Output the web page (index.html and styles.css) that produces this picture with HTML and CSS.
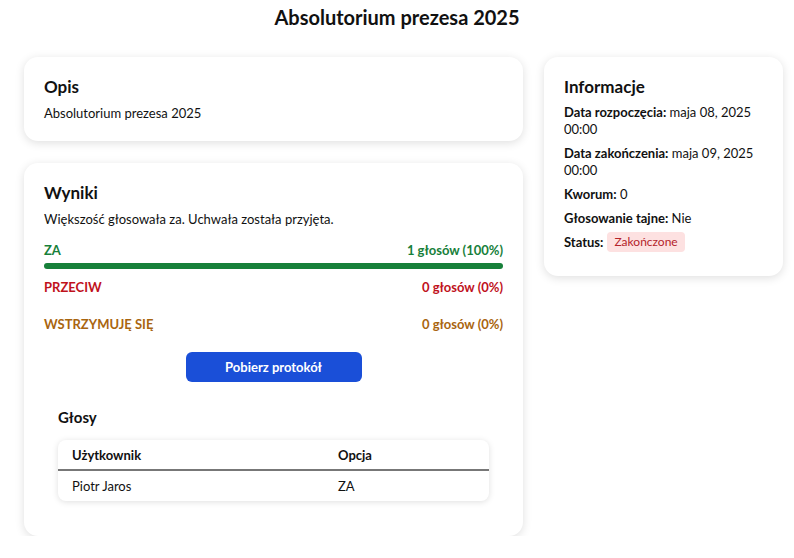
FILE: index.html
```html
<!DOCTYPE html>
<html lang="pl">
<head>
<meta charset="utf-8">
<title>Absolutorium prezesa 2025</title>
<link rel="stylesheet" href="styles.css">
</head>
<body>
<h1 class="page-title">Absolutorium prezesa 2025</h1>
<div class="layout">
  <div class="main-col">
    <section class="card">
      <h2 class="card-title">Opis</h2>
      <p class="text">Absolutorium prezesa 2025</p>
    </section>
    <section class="card">
      <h2 class="card-title">Wyniki</h2>
      <p class="text">Większość głosowała za. Uchwała została przyjęta.</p>
      <div class="results">
        <div class="result result-za">
          <div class="result-row"><span>ZA</span><span>1 głosów (100%)</span></div>
          <div class="bar"><div class="bar-fill" style="width:100%"></div></div>
        </div>
        <div class="result result-przeciw">
          <div class="result-row"><span>PRZECIW</span><span>0 głosów (0%)</span></div>
          <div class="bar"><div class="bar-fill" style="width:0%"></div></div>
        </div>
        <div class="result result-wstrz">
          <div class="result-row"><span>WSTRZYMUJĘ SIĘ</span><span>0 głosów (0%)</span></div>
          <div class="bar"><div class="bar-fill" style="width:0%"></div></div>
        </div>
      </div>
      <div class="actions"><button class="btn">Pobierz protokół</button></div>
      <div class="votes">
        <h3 class="votes-title">Głosy</h3>
        <div class="table-wrap">
          <table class="votes-table">
            <thead><tr><th class="col-user">Użytkownik</th><th>Opcja</th></tr></thead>
            <tbody><tr><td>Piotr Jaros</td><td>ZA</td></tr></tbody>
          </table>
        </div>
      </div>
    </section>
  </div>
  <aside class="side-col">
    <section class="card info">
      <h2 class="card-title">Informacje</h2>
      <p class="info-line"><b>Data rozpoczęcia:</b> maja 08, 2025 00:00</p>
      <p class="info-line"><b>Data zakończenia:</b> maja 09, 2025 00:00</p>
      <p class="info-line"><b>Kworum:</b> 0</p>
      <p class="info-line"><b>Głosowanie tajne:</b> Nie</p>
      <p class="info-line status-line"><b>Status:</b> <span class="badge">Zakończone</span></p>
    </section>
  </aside>
</div>
</body>
</html>
```
FILE: styles.css
```css
* { box-sizing: border-box; }
body {
  margin: 0;
  background: #fff;
  color: #111;
  font-family: Lato, "Noto Sans", sans-serif;
  font-size: 13px;
}
.page-title {
  margin: 5px 0 0;
  text-align: center;
  font-size: 20px;
  line-height: 24px;
  font-weight: 700;
}
.layout {
  display: grid;
  grid-template-columns: 499px 239px;
  gap: 21px;
  padding: 28px 0 0 24px;
  align-items: start;
}
.main-col {
  display: flex;
  flex-direction: column;
  gap: 22px;
}
.card {
  background: #fff;
  border-radius: 14px;
  box-shadow: 0 2px 10px rgba(0,0,0,0.13);
  padding: 19px 20px 18px;
}
.card-title {
  margin: 0;
  font-size: 17px;
  line-height: 22px;
  font-weight: 700;
}
.text {
  margin: 5px 0 0;
  line-height: 20px;
}
.results { margin-top: 11px; }
.result + .result { margin-top: 8px; }
.result-row {
  display: flex;
  justify-content: space-between;
  font-weight: 700;
  line-height: 20px;
}
.bar {
  margin-top: 3px;
  height: 6px;
  border-radius: 3px;
}
.bar-fill { height: 100%; border-radius: 3px; }
.result-za { color: #17803a; }
.result-za .bar-fill { background: #17803a; }
.result-przeciw { color: #c0121c; }
.result-przeciw .bar-fill { background: #c0121c; }
.result-wstrz { color: #a9650f; }
.result-wstrz .bar-fill { background: #a9650f; }
.actions {
  display: flex;
  justify-content: center;
  margin-top: 9px;
}
.btn {
  width: 176px;
  height: 30px;
  border: 0;
  border-radius: 6px;
  background: #1a4fd8;
  color: #fff;
  font-family: inherit;
  font-size: 13px;
  font-weight: 700;
}
.votes {
  padding: 0 14px 17px;
  margin-top: 24px;
}
.votes-title {
  margin: 0;
  font-size: 15px;
  line-height: 22px;
  font-weight: 700;
}
.table-wrap {
  margin-top: 12px;
  border-radius: 8px;
  box-shadow: 0 1px 6px rgba(0,0,0,0.13);
  overflow: hidden;
}
.votes-table {
  width: 100%;
  border-collapse: collapse;
  font-size: 13px;
}
.votes-table th, .votes-table td {
  text-align: left;
  padding: 0 14px;
  line-height: 20px;
}
.votes-table th {
  height: 30px;
  font-weight: 700;
  border-bottom: 2px solid #777;
}
.votes-table td { height: 31px; }
.col-user { width: 266px; }
.info { padding-bottom: 24px; }
.info-line {
  margin: 7px 0 0;
  line-height: 17px;
}
.card-title + .info-line { margin-top: 6px; }
.status-line {
  display: flex;
  align-items: center;
  gap: 4px;
  margin-top: 5px;
}
.badge {
  display: inline-block;
  padding: 0 7px;
  height: 20px;
  line-height: 20px;
  border-radius: 4px;
  background: #fde1e1;
  color: #b4232a;
  font-size: 12px;
}
```
